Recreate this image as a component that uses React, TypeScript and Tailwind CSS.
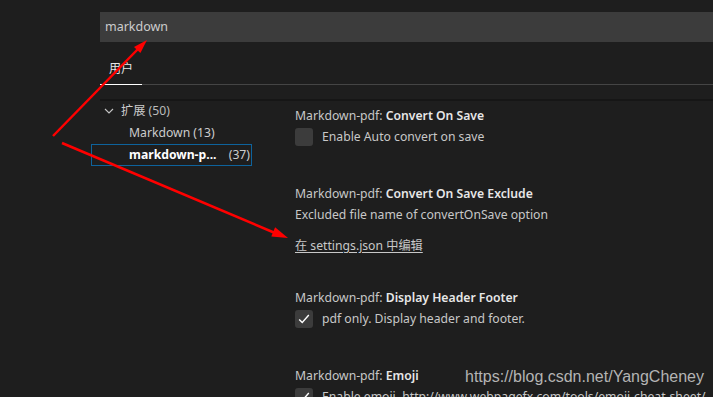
const font = "font-['Segoe_UI','Noto_Sans','Noto_Sans_CJK_SC',sans-serif]";

function Checkbox({ checked }: { checked?: boolean }) {
  return (
    <div className="flex h-[18px] w-[18px] shrink-0 items-center justify-center rounded-[3px] bg-[#3c3c3c]">
      {checked && (
        <svg width="14" height="14" viewBox="0 0 16 16" fill="none">
          <path d="M2.5 8.5 L6 12 L13.5 3.5" stroke="#ffffff" strokeWidth="1.6" />
        </svg>
      )}
    </div>
  );
}

function Title({ name }: { name: string }) {
  return (
    <div className="h-[18px] text-[12.2px] leading-[18px] text-[#c8c8c8]">
      Markdown-pdf: <span className="font-semibold text-[#e7e7e7]">{name}</span>
    </div>
  );
}

export default function App() {
  return (
    <div className={`relative h-[397px] w-[713px] overflow-hidden bg-[#1e1e1e] ${font}`}>
      <div className="pl-[100px] pt-[12px]">
        <div className="flex h-[30px] items-center bg-[#3c3c3c] pl-[5px] pt-px text-[12.5px] text-[#cccccc]">
          markdown
        </div>
        <div className="mt-[13px] flex border-b border-[#454545]">
          <div className="-mb-px flex h-[30px] w-[42px] items-center justify-center border-b border-white pb-[2px] text-[12px] text-[#e7e7e7]">
            用户
          </div>
        </div>
        <div className="mt-[14px] h-[2px] bg-[#161616]" />
      </div>

      <div className="flex pl-[91px]">
        <div className="-mt-px w-[161px] shrink-0 whitespace-nowrap text-[12.2px] text-[#cccccc]">
          <div className="flex h-[22px] items-center pl-[13px]">
            <svg width="10" height="10" viewBox="0 0 10 10" fill="none">
              <path d="M1 3 L5 7 L9 3" stroke="#c5c5c5" strokeWidth="1.1" />
            </svg>
            <span className="ml-[7px]">扩展 <span className="text-[#bbbbbb]">(50)</span></span>
          </div>
          <div className="flex h-[22px] items-center pl-[38px]">Markdown (13)</div>
          <div className="flex h-[22px] items-center justify-between border border-[#0e639c] pl-[37px] pr-[1px]">
            <span className="font-bold text-white">markdown-p...</span>
            <span>(37)</span>
          </div>
        </div>

        <div className="ml-[43px] min-w-0 flex-1 text-[12.2px] text-[#c8c8c8]">
          <div className="mt-[6px]">
            <Title name="Convert On Save" />
            <div className="mt-[3px] flex items-center gap-[9px]">
              <Checkbox />
              <span className="leading-[18px]">Enable Auto convert on save</span>
            </div>
          </div>

          <div className="mt-[39px]">
            <Title name="Convert On Save Exclude" />
            <div className="mt-[3px] h-[18px] leading-[18px]">Excluded file name of convertOnSave option</div>
            <div className="mt-[13px] h-[18px] leading-[18px] underline underline-offset-2">在 settings.json 中编辑</div>
          </div>

          <div className="mt-[34px]">
            <Title name="Display Header Footer" />
            <div className="mt-[3px] flex items-center gap-[9px]">
              <Checkbox checked />
              <span className="leading-[18px]">pdf only. Display header and footer.</span>
            </div>
          </div>

          <div className="mt-[39px]">
            <Title name="Emoji" />
            <div className="mt-[3px] flex items-center gap-[9px]">
              <Checkbox checked />
              <span className="whitespace-nowrap leading-[18px]">Enable emoji. http://www.webpagefx.com/tools/emoji-cheat-sheet/</span>
            </div>
          </div>
        </div>
      </div>

      <div className="absolute left-[465px] top-[367px] font-['Liberation_Sans',sans-serif] text-[16px] leading-[20px] text-[#b4b4b4]">
        https://blog.csdn.net/YangCheney
      </div>

      <svg className="pointer-events-none absolute left-0 top-0" width="713" height="397">
        <line x1="53" y1="136" x2="138" y2="49" stroke="#ff0000" strokeWidth="2.5" />
        <polygon points="147,40 140.4,53.1 134,46.9" fill="#ff0000" />
        <line x1="62" y1="143" x2="275" y2="233" stroke="#ff0000" strokeWidth="2.5" />
        <polygon points="288,238 271.3,236.4 275.1,227.2" fill="#ff0000" />
      </svg>
    </div>
  );
}
